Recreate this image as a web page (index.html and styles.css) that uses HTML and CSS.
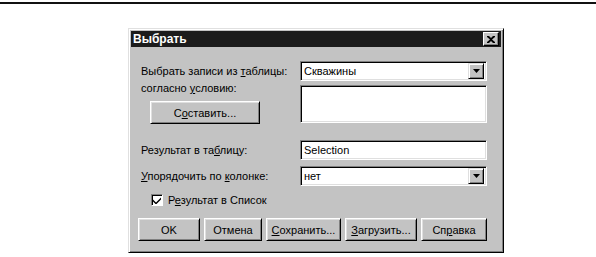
FILE: index.html
```html
<!DOCTYPE html>
<html lang="ru">
<head>
    <meta charset="UTF-8">
    <title>Выбрать</title>
    <link rel="stylesheet" href="styles.css">
</head>
<body>

    <div class="top-rule"></div>

    <!-- Диалог выборки -->
    <div class="dialog">
        <div class="titlebar">
            <span class="title">Выбрать</span>
            <span class="close-btn">
                <svg width="8" height="7" viewBox="0 0 8 7"><path d="M0 0h2l2 2 2-2h2v1L5 3.5 8 6v1H6L4 5 2 7H0V6l3-2.5L0 1z" fill="#000"/></svg>
            </span>
        </div>

        <div class="dialog-body">
            <div class="row row-source">
                <span class="label">Выбрать записи из <u>т</u>аблицы:</span>
                <div class="combo">
                    <span class="combo-value">Скважины</span>
                    <span class="combo-btn"><svg width="7" height="4" viewBox="0 0 7 4"><path d="M0 0h7L3.5 4z" fill="#000"/></svg></span>
                </div>
            </div>

            <div class="row row-condition">
                <div class="condition-left">
                    <span class="label label-condition">согласно <u>у</u>словию:</span>
                    <button class="btn btn-compose">С<u>о</u>ставить...</button>
                </div>
                <div class="field memo"></div>
            </div>

            <div class="row row-result">
                <span class="label">Результат в та<u>б</u>лицу:</span>
                <div class="field edit">Selection</div>
            </div>

            <div class="row row-order">
                <span class="label"><u>У</u>порядочить по <u>к</u>олонке:</span>
                <div class="combo">
                    <span class="combo-value">нет</span>
                    <span class="combo-btn"><svg width="7" height="4" viewBox="0 0 7 4"><path d="M0 0h7L3.5 4z" fill="#000"/></svg></span>
                </div>
            </div>

            <label class="check-row">
                <span class="checkbox"><svg width="8" height="7" viewBox="0 0 8 7"><path d="M0 2.5l3 3L8 0.5v2L3 7.5 0 4.5z" fill="#000"/></svg></span>
                <span>Р<u>е</u>зультат в Список</span>
            </label>

            <div class="button-row">
                <button class="btn btn-ok">OK</button>
                <button class="btn btn-cancel">Отмена</button>
                <button class="btn btn-save"><u>С</u>охранить...</button>
                <button class="btn btn-load"><u>З</u>агрузить...</button>
                <button class="btn btn-help">Сп<u>р</u>авка</button>
            </div>
        </div>
    </div>

</body>
</html>
```

FILE: styles.css
```css
/* Общие стили */
body {
    margin: 0;
    background: #fff;
    font-family: "Liberation Sans", Arial, sans-serif;
    font-size: 11px;
    color: #000;
}

.top-rule {
    margin-top: 2px;
    height: 2px;
    background: #111;
}

/* Окно диалога */
.dialog {
    box-sizing: border-box;
    width: 376px;
    height: 225px;
    margin: 24px 0 0 128px;
    padding: 2px;
    background: #c3c3c3;
    border: 1px solid;
    border-color: #e0e0e0 #000 #000 #e0e0e0;
    box-shadow: inset 1px 1px #fff, inset -1px -1px #808080;
}

.titlebar {
    display: flex;
    align-items: center;
    justify-content: space-between;
    height: 16px;
    padding: 0 2px 0 2px;
    background: #1c1c1c;
}

.title {
    color: #fff;
    font-weight: bold;
    font-size: 12px;
}

.close-btn {
    box-sizing: border-box;
    display: flex;
    align-items: center;
    justify-content: center;
    width: 16px;
    height: 14px;
    background: #c3c3c3;
    border: 1px solid;
    border-color: #fff #000 #000 #fff;
    box-shadow: inset -1px -1px #808080;
}

/* Содержимое */
.dialog-body {
    padding: 14px 0 0 10px;
}

.row {
    display: grid;
    grid-template-columns: 159px 187px;
    align-items: center;
}

.row-condition {
    margin-top: 4px;
    align-items: start;
}

.row-result {
    margin-top: 16px;
}

.row-order {
    margin-top: 6px;
}

.label {
    white-space: nowrap;
}

.condition-left {
    display: flex;
    flex-direction: column;
    align-items: flex-start;
}

.label-condition {
    margin-top: -3px;
    line-height: 13px;
}

/* Поля ввода */
.field,
.combo {
    box-sizing: border-box;
    height: 20px;
    background: #fff;
    border: 1px solid;
    border-color: #808080 #fff #fff #808080;
    box-shadow: inset 1px 1px #000, inset -1px -1px #dfdfdf;
}

.edit {
    padding: 3px 0 0 3px;
}

.memo {
    height: 38px;
}

.combo {
    display: flex;
    align-items: center;
    justify-content: space-between;
    padding: 2px 2px 2px 3px;
}

.combo-btn {
    box-sizing: border-box;
    display: flex;
    align-items: center;
    justify-content: center;
    width: 16px;
    height: 16px;
    background: #c3c3c3;
    border: 1px solid;
    border-color: #dfdfdf #000 #000 #dfdfdf;
    box-shadow: inset 1px 1px #fff, inset -1px -1px #808080;
}

/* Кнопки */
.btn {
    box-sizing: border-box;
    height: 23px;
    padding: 0;
    font: inherit;
    color: #000;
    background: #c3c3c3;
    border: 1px solid;
    border-color: #fff #000 #000 #fff;
    box-shadow: inset 1px 1px #dfdfdf, inset -1px -1px #808080;
}

.btn-compose {
    width: 110px;
    margin: 6px 0 0 9px;
}

/* Флажок */
.check-row {
    display: flex;
    align-items: center;
    gap: 5px;
    margin: 8px 0 0 10px;
}

.checkbox {
    box-sizing: border-box;
    display: flex;
    align-items: center;
    justify-content: center;
    width: 12px;
    height: 12px;
    background: #fff;
    border: 1px solid;
    border-color: #808080 #fff #fff #808080;
    box-shadow: inset 1px 1px #000;
}

.button-row {
    display: flex;
    gap: 4px;
    margin: 12px 0 0 -3px;
}

.btn-ok { width: 62px; }
.btn-cancel { width: 58px; }
.btn-save { width: 75px; }
.btn-load { width: 72px; }
.btn-help { width: 66px; }
```
